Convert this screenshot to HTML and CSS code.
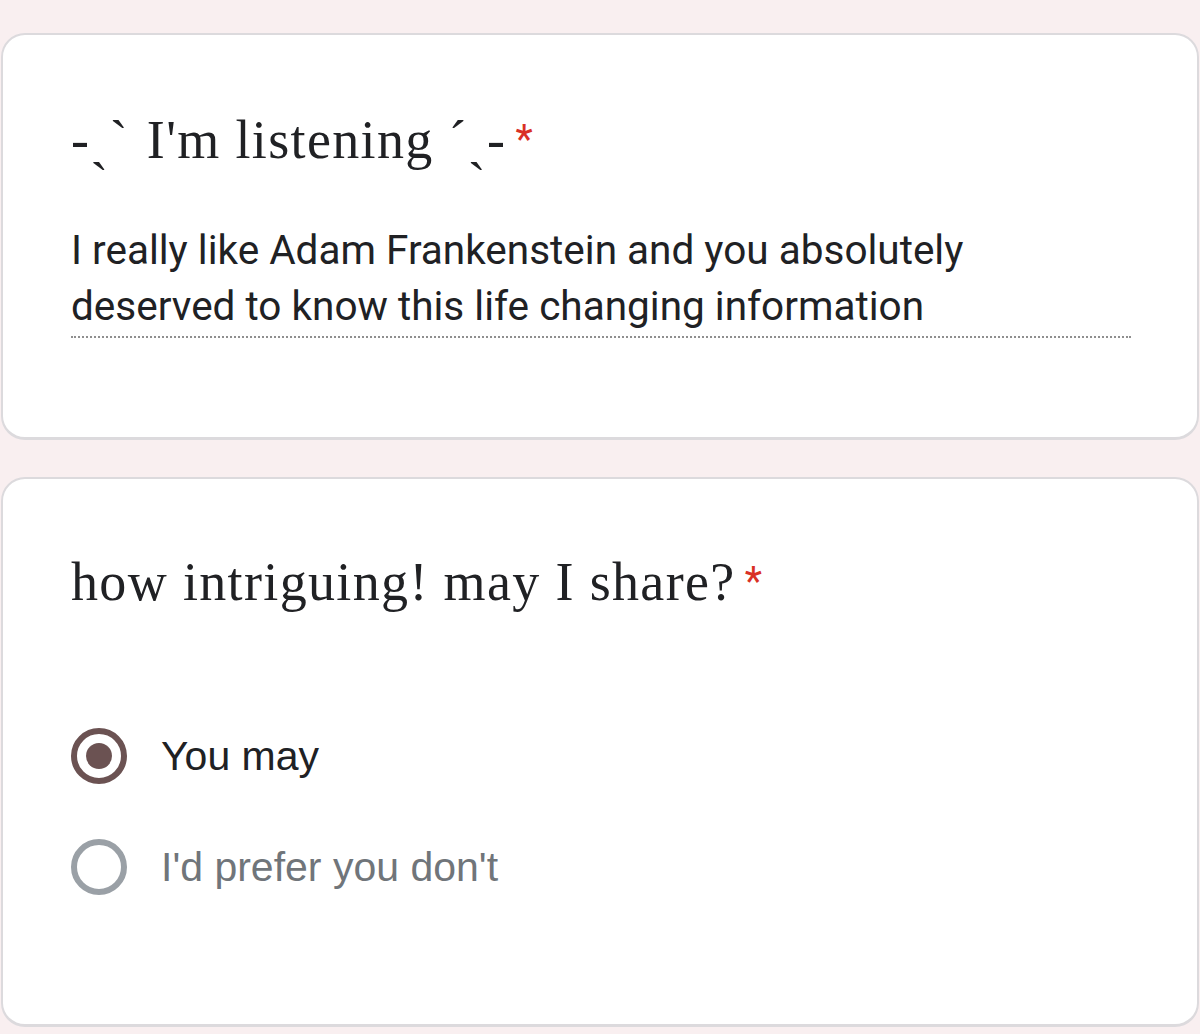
FILE: index.html
```html
<!DOCTYPE html>
<html>
<head>
<meta charset="utf-8">
<link rel="stylesheet" href="styles.css">
</head>
<body>
<div class="page">
  <section class="card card-text">
    <h2 class="q-title"><span class="deco">-ˏˋ</span> I'm listening ˊˎ-<span class="req">*</span></h2>
    <div class="answer">I really like Adam Frankenstein and you absolutely deserved to know this life changing information</div>
  </section>
  <section class="card card-choice">
    <h2 class="q-title">how intriguing! may I share?<span class="req">*</span></h2>
    <div class="options">
      <div class="option">
        <span class="radio checked"><span class="dot"></span></span>
        <span class="label">You may</span>
      </div>
      <div class="option">
        <span class="radio"></span>
        <span class="label muted">I'd prefer you don't</span>
      </div>
    </div>
  </section>
</div>
</body>
</html>
```
FILE: styles.css
```css
html, body {
  margin: 0;
  padding: 0;
  background: #f9eff0;
}
.page {
  padding: 33px 1px 0 1px;
  display: flex;
  flex-direction: column;
  gap: 37px;
}
.card {
  background: #fff;
  border: 2px solid #dcdadd;
  border-bottom-width: 3px;
  border-radius: 24px;
  box-sizing: border-box;
  padding: 0 68px;
}
.card-text {
  height: 407px;
  padding-top: 71px;
}
.card-choice {
  height: 550px;
  padding-top: 69px;
}
.q-title {
  margin: 0;
  font-family: "Liberation Serif", "DejaVu Serif", serif;
  font-weight: normal;
  font-size: 54px;
  line-height: 68px;
  color: #202124;
  letter-spacing: 1.35px;
}
.deco {
  margin-right: 3px;
}
.req {
  color: #d93025;
  margin-left: 9px;
  font-family: "Roboto", sans-serif;
  font-size: 40px;
  vertical-align: top;
}
.answer {
  margin-top: 48px;
  font-family: "Roboto", "Liberation Sans", sans-serif;
  font-size: 40.5px;
  line-height: 56px;
  color: #202124;
  padding-bottom: 2px;
  border-bottom: 2px dotted #8f8f8f;
  width: 1060px;
}
.options {
  margin-top: 112px;
  display: flex;
  flex-direction: column;
  gap: 55px;
}
.option {
  display: flex;
  align-items: center;
  gap: 34px;
}
.radio {
  width: 56px;
  height: 56px;
  box-sizing: border-box;
  border: 6px solid #9aa0a6;
  border-radius: 50%;
  display: flex;
  align-items: center;
  justify-content: center;
}
.radio.checked {
  border-color: #6b5252;
}
.dot {
  width: 26px;
  height: 26px;
  border-radius: 50%;
  background: #6b5252;
}
.label {
  font-family: "Liberation Sans", "Arial", sans-serif;
  font-size: 41px;
  color: #202124;
}
.label.muted {
  color: #70757a;
}
```
